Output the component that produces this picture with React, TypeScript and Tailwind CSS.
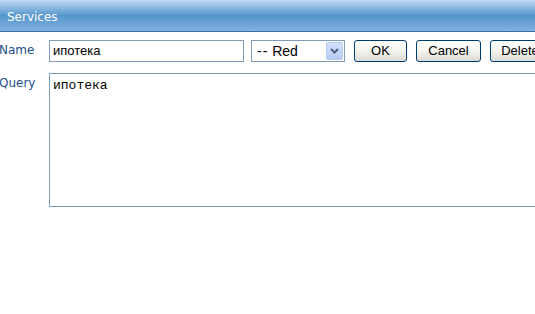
import React from "react";

const label = "text-[12px] text-[#1d4f8a] font-['DejaVu_Sans',Verdana,sans-serif]";

const Button = ({ children, className }: { children: React.ReactNode; className: string }) => (
  <button
    className={`h-[22px] shrink-0 rounded-[3px] border border-[#003c74] bg-gradient-to-b from-white via-[#f4f4f0] to-[#dcdad2] text-[13px] text-black font-['Liberation_Sans',Arial,sans-serif] ${className}`}
  >
    {children}
  </button>
);

export default function App() {
  return (
    <div className="w-[535px] h-[314px] overflow-hidden bg-white">
      <div className="h-[32px] border-b border-[#3b6ea5] bg-gradient-to-b from-[#c2dcf2] via-[#5596cc] to-[#7fb1de] pl-[7px] pt-[8px] text-[12px] text-white font-['DejaVu_Sans',Verdana,sans-serif]">
        Services
      </div>
      <div className="flex items-start pt-[8px]">
        <div className={`w-[50px] shrink-0 -ml-[1px] pt-[1px] ${label}`}>Name</div>
        <div className="flex items-center">
          <div className="w-[195px] h-[22px] shrink-0 border border-[#7f9db9] pl-[3px] text-[13px] leading-[20px] text-black font-['Liberation_Sans',Arial,sans-serif]">
            ипотека
          </div>
          <div className="ml-[7px] w-[94px] h-[22px] shrink-0 border border-[#7f9db9] flex items-center justify-between pl-[5px] pr-[1px] text-[14px] text-black font-['Liberation_Sans',Arial,sans-serif]">
            <span>
              <span className="tracking-[1px]">--</span> Red
            </span>
            <span className="w-[17px] h-[18px] rounded-[2px] border border-[#b5c8ef] bg-gradient-to-b from-[#d4e1fb] to-[#b6cbf6] flex items-center justify-center">
              <svg width="9" height="6" viewBox="0 0 9 6">
                <path d="M1 1 L4.5 4.5 L8 1" stroke="#4d6185" strokeWidth="2" fill="none" />
              </svg>
            </span>
          </div>
          <Button className="ml-[9px] w-[53px]">OK</Button>
          <Button className="ml-[9px] w-[65px]">Cancel</Button>
          <Button className="ml-[9px] w-[60px]">Delete</Button>
        </div>
      </div>
      <div className="flex items-start pt-[11px]">
        <div className={`w-[50px] shrink-0 -ml-[1px] pt-[1px] ${label}`}>Query</div>
        <div className="w-[500px] h-[134px] shrink-0 border border-[#7f9db9] pl-[3px] pt-[2px] text-[13px] text-black font-['Liberation_Mono','Courier_New',monospace]">
          ипотека
        </div>
      </div>
    </div>
  );
}
